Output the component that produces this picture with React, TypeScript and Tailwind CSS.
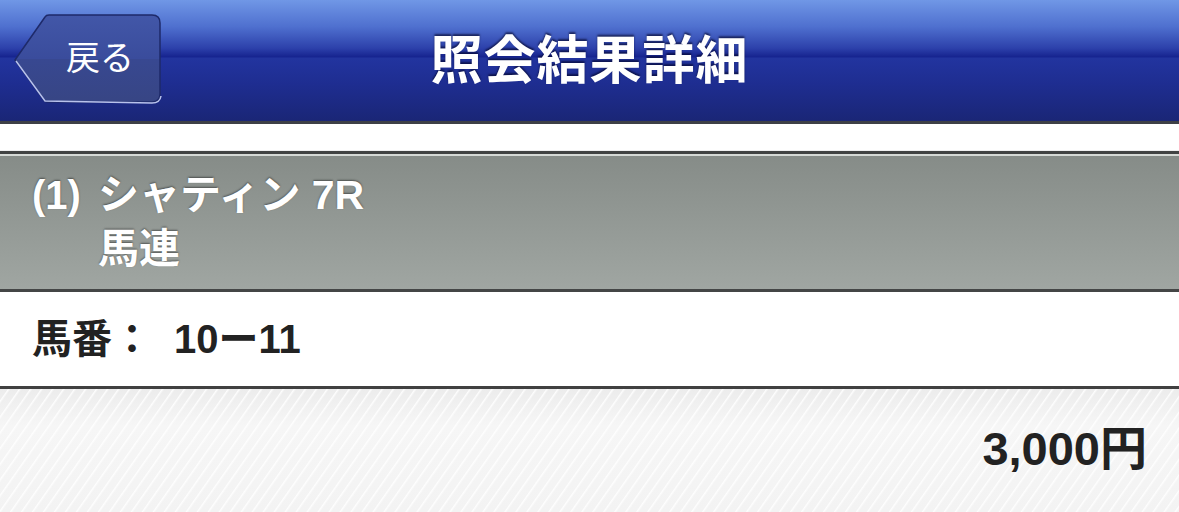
import React from 'react';

const jp = "font-['Liberation_Sans','Noto_Sans_CJK_JP',sans-serif]";

// 戻るボタンの形
const BackButton: React.FC = () => (
    <button type="button" className="relative w-[150px] h-[92px] text-white">
        <svg className="absolute inset-0" width="150" height="92" viewBox="0 0 150 92">
            <defs>
                <linearGradient id="backFill" x1="0" y1="0" x2="0" y2="1">
                    <stop offset="0" stopColor="#4257a8" />
                    <stop offset="0.5" stopColor="#3a4c9c" />
                    <stop offset="0.51" stopColor="#384891" />
                    <stop offset="1" stopColor="#374584" />
                </linearGradient>
            </defs>
            <path
                d="M1 46 L31 3 Q32 1 35 1 L138 1 Q146 1 146 9 L146 80 Q146 88 138 88 L33 88 Q31 88 30 86 Z"
                fill="url(#backFill)"
                stroke="#1e2a6a"
                strokeWidth="1.5"
            />
            <path d="M2 47 L31 87 L138 89 Q146 89 147 82" fill="none" stroke="#b8c2ec" strokeWidth="1.5" />
        </svg>
        <span className={`relative block pl-[30px] pr-[8px] pb-[4px] text-[34px] leading-none ${jp}`}>戻る</span>
    </button>
);

export default function App() {
    return (
        <div className={`w-[1179px] h-[512px] overflow-hidden bg-white ${jp}`}>
            {/* ヘッダー */}
            <div className="relative h-[124px] border-b-[3px] border-[#3e4046] bg-[linear-gradient(180deg,#7097e6_0%,#4f70cf_22%,#2c40aa_40%,#16238f_47%,#22349f_48%,#1e2d90_70%,#1a2676_100%)]">
                <div className="absolute left-[14px] top-[14px]">
                    <BackButton />
                </div>
                <div className="h-full flex items-center justify-center">
                    <h1 className="text-white font-bold text-[52px] leading-none tracking-[1px] [text-shadow:0_-2px_2px_rgba(0,0,30,0.6)]">
                        照会結果詳細
                    </h1>
                </div>
            </div>

            {/* 余白 */}
            <div className="h-[27px] bg-white border-b border-[#f0f0f0]" />

            {/* レース情報 */}
            <div className="border-t-[3px] border-[#414343]">
                <div className="h-[2px] bg-[#d6dad6]" />
                <div className="h-[136px] border-b-[3px] border-[#444646] bg-[linear-gradient(180deg,#868c88_0%,#939995_50%,#a0a6a2_100%)] flex gap-[17px] pl-[32px] pt-[12px] text-white font-bold text-[41px] leading-[54px] [text-shadow:0_-1px_2px_rgba(0,0,0,0.45)]">
                    <span className="text-[40px]">(1)</span>
                    <div className="flex flex-col">
                        <span>シャティン 7R</span>
                        <span>馬連</span>
                    </div>
                </div>
            </div>

            {/* 馬番 */}
            <div className="h-[97px] border-b-[3px] border-[#404040] bg-white flex items-center pl-[32px] text-[#222] font-bold text-[40px] leading-none">
                <span>馬番：</span>
                <span className="ml-[22px]">10ー11</span>
            </div>

            {/* 金額 */}
            <div className="h-[123px] bg-[repeating-linear-gradient(125deg,rgba(255,255,255,0)_0px,rgba(255,255,255,0)_6px,rgba(255,255,255,0.9)_7px,rgba(255,255,255,0)_9px),linear-gradient(180deg,#ececec_0%,#f6f6f6_30%,#f3f3f3_100%)] flex items-center justify-end pr-[32px] pb-[4px]">
                <span className="text-[#222] font-bold text-[47px] leading-none">3,000円</span>
            </div>
        </div>
    );
}
